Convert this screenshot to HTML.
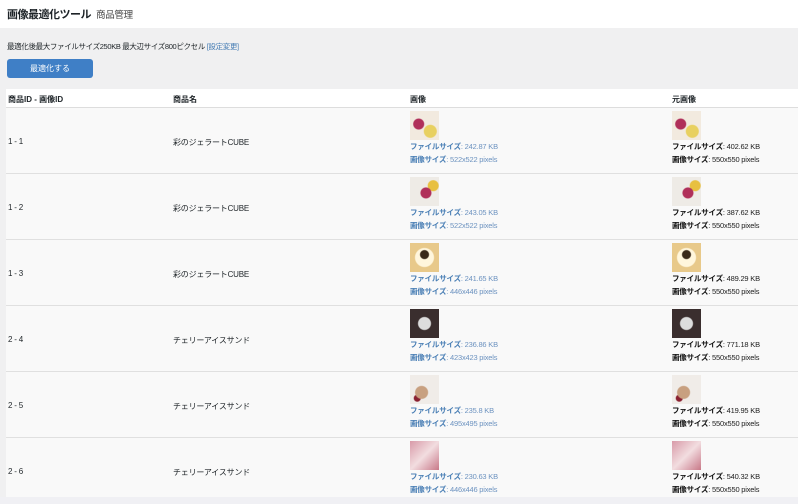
<!DOCTYPE html>
<html><head><meta charset="utf-8"><style>
*{margin:0;padding:0;box-sizing:border-box}
body{width:798px;height:497px;overflow:hidden;background:#f0f0f4;font-family:"Liberation Sans","Noto Sans CJK JP",sans-serif;color:#1d2327;position:relative}
.top{position:absolute;left:0;top:0;width:798px;height:28px;background:#fff}
.top h1{position:absolute;left:7px;top:6px;font-size:11px;font-weight:bold;letter-spacing:-0.5px}
.top span{position:absolute;left:96px;top:7px;font-size:9.5px;color:#444;letter-spacing:-0.3px}
.main{position:absolute;left:0;top:28px;width:798px;height:469px;background:#f0f0f1}
.info{position:absolute;left:7px;top:41px;font-size:7.5px;letter-spacing:-0.35px}
.info a{color:#4a7fb5}
.btn{position:absolute;left:7px;top:59px;width:86px;height:19px;background:#3f7fc6;border-radius:3px;color:#fff;font-size:8px;text-align:center;line-height:19px}
.tbl{position:absolute;left:6px;top:89px;width:792px;height:408px;background:#f9f9f9}
.hd{position:absolute;left:0;top:0;width:792px;height:19px;border-bottom:1px solid #ddd;background:#fff}
.hd div{position:absolute;top:5px;font-size:8px;font-weight:bold}
.row{position:absolute;left:0;width:792px;height:66px;border-bottom:1px solid #e0e0e0}
.c{position:absolute;font-size:8px;letter-spacing:-0.2px}
.th{position:absolute;width:29px;height:29px;top:3px}
.t1,.t2{position:absolute;font-size:7.5px;white-space:nowrap;letter-spacing:-0.2px}
.t1{top:33px}.t2{top:46px}
.b b{color:#4a7fb5}.b{color:#6d93c0}
.k b{color:#111}.k{color:#222}
</style></head><body>
<div class="top"><h1>画像最適化ツール</h1><span>商品管理</span></div>
<div class="main"></div>
<div class="info">最適化後最大ファイルサイズ250KB 最大辺サイズ800ピクセル <a>[設定変更]</a></div>
<div class="btn">最適化する</div>
<div class="tbl">
<div class="hd"><div style="left:2px">商品ID - 画像ID</div><div style="left:167px">商品名</div><div style="left:404px">画像</div><div style="left:666px">元画像</div></div>

<div class="row" style="top:19px">
<div class="c" style="left:2px;top:29px">1 - 1</div><div class="c" style="left:167px;top:29px">彩のジェラートCUBE</div>
<div class="th" style="left:404px;background:radial-gradient(circle at 30% 45%,#b0305a 0 5px,transparent 6px),radial-gradient(circle at 70% 70%,#e8d060 0 6px,transparent 7px),#f2eadf"></div>
<div class="t1 b" style="left:404px"><b>ファイルサイズ</b>: 242.87 KB</div><div class="t2 b" style="left:404px"><b>画像サイズ</b>: 522x522 pixels</div>
<div class="th" style="left:666px;background:radial-gradient(circle at 30% 45%,#b0305a 0 5px,transparent 6px),radial-gradient(circle at 70% 70%,#e8d060 0 6px,transparent 7px),#f2eadf"></div>
<div class="t1 k" style="left:666px"><b>ファイルサイズ</b>: 402.62 KB</div><div class="t2 k" style="left:666px"><b>画像サイズ</b>: 550x550 pixels</div>
</div>

<div class="row" style="top:85px">
<div class="c" style="left:2px;top:29px">1 - 2</div><div class="c" style="left:167px;top:29px">彩のジェラートCUBE</div>
<div class="th" style="left:404px;background:radial-gradient(circle at 55% 55%,#b0305a 0 5px,transparent 6px),radial-gradient(circle at 80% 30%,#e8c040 0 5px,transparent 6px),#eeebe6"></div>
<div class="t1 b" style="left:404px"><b>ファイルサイズ</b>: 243.05 KB</div><div class="t2 b" style="left:404px"><b>画像サイズ</b>: 522x522 pixels</div>
<div class="th" style="left:666px;background:radial-gradient(circle at 55% 55%,#b0305a 0 5px,transparent 6px),radial-gradient(circle at 80% 30%,#e8c040 0 5px,transparent 6px),#eeebe6"></div>
<div class="t1 k" style="left:666px"><b>ファイルサイズ</b>: 387.62 KB</div><div class="t2 k" style="left:666px"><b>画像サイズ</b>: 550x550 pixels</div>
</div>

<div class="row" style="top:151px">
<div class="c" style="left:2px;top:29px">1 - 3</div><div class="c" style="left:167px;top:29px">彩のジェラートCUBE</div>
<div class="th" style="left:404px;background:radial-gradient(circle at 50% 40%,#3a2a1a 0 4px,transparent 5px),radial-gradient(circle at 50% 50%,#fff6dc 0 9px,transparent 10px),#e8c98a"></div>
<div class="t1 b" style="left:404px"><b>ファイルサイズ</b>: 241.65 KB</div><div class="t2 b" style="left:404px"><b>画像サイズ</b>: 446x446 pixels</div>
<div class="th" style="left:666px;background:radial-gradient(circle at 50% 40%,#3a2a1a 0 4px,transparent 5px),radial-gradient(circle at 50% 50%,#fff6dc 0 9px,transparent 10px),#e8c98a"></div>
<div class="t1 k" style="left:666px"><b>ファイルサイズ</b>: 489.29 KB</div><div class="t2 k" style="left:666px"><b>画像サイズ</b>: 550x550 pixels</div>
</div>

<div class="row" style="top:217px">
<div class="c" style="left:2px;top:29px">2 - 4</div><div class="c" style="left:167px;top:29px">チェリーアイスサンド</div>
<div class="th" style="left:404px;background:radial-gradient(circle at 50% 50%,#ddd 0 6px,transparent 7px),#3a2e2e"></div>
<div class="t1 b" style="left:404px"><b>ファイルサイズ</b>: 236.86 KB</div><div class="t2 b" style="left:404px"><b>画像サイズ</b>: 423x423 pixels</div>
<div class="th" style="left:666px;background:radial-gradient(circle at 50% 50%,#ddd 0 6px,transparent 7px),#3a2e2e"></div>
<div class="t1 k" style="left:666px"><b>ファイルサイズ</b>: 771.18 KB</div><div class="t2 k" style="left:666px"><b>画像サイズ</b>: 550x550 pixels</div>
</div>

<div class="row" style="top:283px">
<div class="c" style="left:2px;top:29px">2 - 5</div><div class="c" style="left:167px;top:29px">チェリーアイスサンド</div>
<div class="th" style="left:404px;background:radial-gradient(circle at 40% 60%,#c8a080 0 6px,transparent 7px),radial-gradient(circle at 25% 80%,#8a2030 0 3px,transparent 4px),#f0ece8"></div>
<div class="t1 b" style="left:404px"><b>ファイルサイズ</b>: 235.8 KB</div><div class="t2 b" style="left:404px"><b>画像サイズ</b>: 495x495 pixels</div>
<div class="th" style="left:666px;background:radial-gradient(circle at 40% 60%,#c8a080 0 6px,transparent 7px),radial-gradient(circle at 25% 80%,#8a2030 0 3px,transparent 4px),#f0ece8"></div>
<div class="t1 k" style="left:666px"><b>ファイルサイズ</b>: 419.95 KB</div><div class="t2 k" style="left:666px"><b>画像サイズ</b>: 550x550 pixels</div>
</div>

<div class="row" style="top:349px;border-bottom:none">
<div class="c" style="left:2px;top:29px">2 - 6</div><div class="c" style="left:167px;top:29px">チェリーアイスサンド</div>
<div class="th" style="left:404px;background:linear-gradient(135deg,#d89aa8,#f2dde0 50%,#c87888)"></div>
<div class="t1 b" style="left:404px"><b>ファイルサイズ</b>: 230.63 KB</div><div class="t2 b" style="left:404px"><b>画像サイズ</b>: 446x446 pixels</div>
<div class="th" style="left:666px;background:linear-gradient(135deg,#d89aa8,#f2dde0 50%,#c87888)"></div>
<div class="t1 k" style="left:666px"><b>ファイルサイズ</b>: 540.32 KB</div><div class="t2 k" style="left:666px"><b>画像サイズ</b>: 550x550 pixels</div>
</div>
</div>
</body></html>
